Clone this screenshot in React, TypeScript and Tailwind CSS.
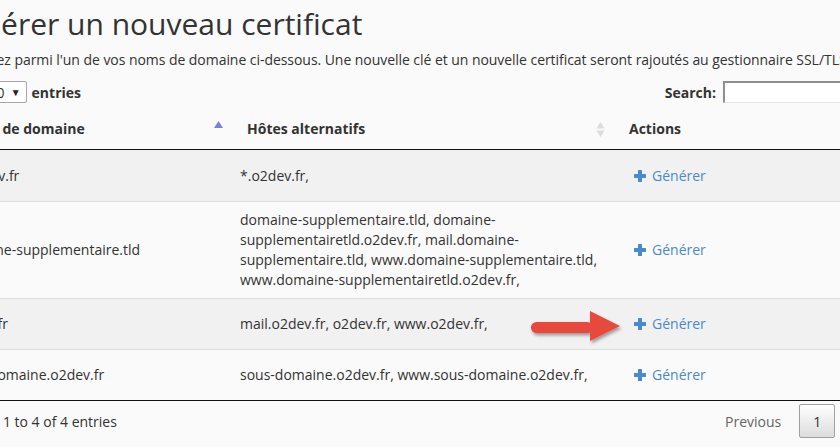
import React from "react";

function SortAsc() {
  return (
    <svg className="absolute right-[7px] top-[12px]" width="9" height="8" viewBox="0 0 9 8">
      <polygon points="4.5,0 9,7 0,7" fill="#7b80e0" />
    </svg>
  );
}

function SortBoth() {
  return (
    <svg className="absolute right-[14px] top-[13px]" width="9" height="16" viewBox="0 0 9 16">
      <polygon points="4.5,0 8.5,6.5 0.5,6.5" fill="#dcdcdc" />
      <polygon points="0.5,8.5 8.5,8.5 4.5,15" fill="#dcdcdc" />
    </svg>
  );
}

function Generer() {
  return (
    <div className="h-[34px] flex items-center pl-[5px] text-[#4a89cb]">
      <svg width="12" height="12" viewBox="0 0 12 12" className="mr-[6px]">
        <rect x="4" y="0" width="4" height="12" rx="0.6" fill="#4a89cb" />
        <rect x="0" y="4" width="12" height="4" rx="0.6" fill="#4a89cb" />
      </svg>
      <span>Générer</span>
    </div>
  );
}

const rows: { domain: string; alt: string[]; striped: boolean }[] = [
  { domain: "*.o2dev.fr", alt: ["*.o2dev.fr,"], striped: true },
  {
    domain: "domaine-supplementaire.tld",
    alt: [
      "domaine-supplementaire.tld, domaine-",
      "supplementairetld.o2dev.fr, mail.domaine-",
      "supplementaire.tld, www.domaine-supplementaire.tld,",
      "www.domaine-supplementairetld.o2dev.fr,",
    ],
    striped: false,
  },
  { domain: "o2dev.fr", alt: ["mail.o2dev.fr, o2dev.fr, www.o2dev.fr,"], striped: true },
  { domain: "sous-domaine.o2dev.fr", alt: ["sous-domaine.o2dev.fr, www.sous-domaine.o2dev.fr,"], striped: false },
];

export default function App() {
  return (
    <div className="w-[840px] h-[447px] overflow-hidden bg-[#fafafa] font-['Open_Sans',sans-serif] text-[#333]">
      <div className="relative ml-[-56px] w-[952px] pt-[7px]">
        <h1 className="text-[30px] leading-[33px] font-normal whitespace-nowrap">Générer un nouveau certificat</h1>
        <p className="mt-[10px] text-[14px] leading-[20px] whitespace-nowrap tracking-[-0.05px]">
          Choisissez parmi l'un de vos noms de domaine ci-dessous. Une nouvelle clé et un nouvelle certificat seront rajoutés au gestionnaire SSL/TLS.
        </p>
        <div className="mt-[11px] h-[22px] flex items-center justify-between text-[14px] font-bold">
          <div className="flex items-center">
            <span>Show</span>
            <div className="ml-[4px] w-[41px] h-[22px] border border-[#a6a6a6] rounded-[2px] bg-white flex items-center justify-between pl-[2px] pr-[5px] font-normal">
              <span>10</span>
              <span className="text-[10px] text-[#222] leading-none">▼</span>
            </div>
            <span className="ml-[5px]">entries</span>
          </div>
          <div className="flex items-center">
            <span>Search:</span>
            <div className="ml-[7px] w-[173px] h-[22px] bg-white border-t-2 border-l-2 border-r border-b border-t-[#8f8f8f] border-l-[#8f8f8f] border-r-[#e3e3e3] border-b-[#e3e3e3]"></div>
          </div>
        </div>

        <table className="mt-[6px] w-full table-fixed border-collapse text-[14px] leading-[20px]">
          <colgroup>
            <col className="w-[286px]" />
            <col className="w-[389px]" />
            <col />
          </colgroup>
          <thead>
            <tr>
              <th className="relative text-left font-bold py-[10px] pl-[21px] pr-[18px] border-b border-[#111]">
                Nom de domaine
                <SortAsc />
              </th>
              <th className="relative text-left font-bold py-[10px] pl-[17px] pr-[18px] border-b border-[#111]">
                Hôtes alternatifs
                <SortBoth />
              </th>
              <th className="text-left font-bold py-[10px] pl-[10px] pr-[18px] border-b border-[#111]">Actions</th>
            </tr>
          </thead>
          <tbody>
            {rows.map((r, i) => (
              <tr key={i} className={r.striped ? "bg-[#f1f1f1]" : "bg-[#fafafa]"}>
                <td className={`px-[10px] ${i === 0 ? "pt-[9px]" : "pt-[8px]"} pb-[8px] align-middle whitespace-nowrap ${i > 0 ? "border-t border-[#dddddd]" : ""}`}>{r.domain}</td>
                <td className={`px-[10px] ${i === 0 ? "pt-[9px]" : "pt-[8px]"} pb-[8px] align-middle whitespace-nowrap ${i > 0 ? "border-t border-[#dddddd]" : ""}`}>
                  {r.alt.map((l, j) => (
                    <div key={j}>{l}</div>
                  ))}
                </td>
                <td className={`px-[10px] ${i === 0 ? "pt-[9px]" : "pt-[8px]"} pb-[8px] align-middle ${i > 0 ? "border-t border-[#dddddd]" : ""}`}>
                  <Generer />
                </td>
              </tr>
            ))}
          </tbody>
        </table>
        <div className="border-t border-[#111]"></div>

        <div className="mt-[3px] h-[34px] flex items-center justify-between text-[14px]">
          <span>Showing 1 to 4 of 4 entries</span>
          <div className="flex items-center">
            <span className="px-[14px] text-[#666]">Previous</span>
            <span className="ml-[4px] w-[36px] h-[34px] border border-[#a0a0a0] rounded-[2px] bg-linear-to-b from-white to-[#dcdcdc] flex items-center justify-center">1</span>
            <span className="ml-[2px] px-[14px] text-[#666]">Next</span>
          </div>
        </div>

        <svg className="absolute left-[584px] top-[307px]" width="100" height="44" viewBox="0 0 100 44">
          <defs>
            <filter id="sh" x="-20%" y="-30%" width="140%" height="170%">
              <feDropShadow dx="1.5" dy="2.5" stdDeviation="1.6" floodColor="#000" floodOpacity="0.35" />
            </filter>
          </defs>
          <g filter="url(#sh)">
            <rect x="3" y="15" width="62" height="11" rx="5.5" fill="#e8483e" />
            <polygon points="62,4 92,19 62,34" fill="#e8483e" />
          </g>
        </svg>
      </div>
    </div>
  );
}
